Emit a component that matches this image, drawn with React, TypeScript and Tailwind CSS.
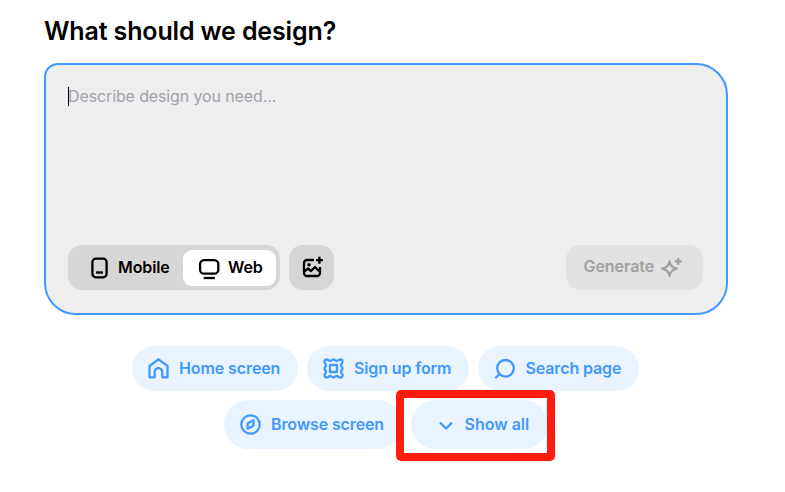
import React from "react";

type IconProps = { className?: string; children: React.ReactNode };

function Icon({ className = "", children }: IconProps) {
  return (
    <svg
      viewBox="0 0 24 24"
      className={`size-6 shrink-0 ${className}`}
      fill="none"
      stroke="currentColor"
      strokeWidth={2.3}
      strokeLinejoin="round"
    >
      {children}
    </svg>
  );
}

type ChipProps = { label: string; box: string; icon: React.ReactNode };

function Chip({ label, box, icon }: ChipProps) {
  return (
    <button className={`flex shrink-0 items-center rounded-full bg-[#e9f4ff] text-base font-semibold whitespace-nowrap text-[#4199ff] ${box}`}>
      {icon}
      <span className="pb-0.5">{label}</span>
    </button>
  );
}

export default function App() {
  return (
    <main className="relative h-[492px] w-[785px] overflow-hidden bg-white font-['Inter',sans-serif] text-black">
      <h1 className="ml-11 pt-[13px] text-[25px] leading-9 font-semibold tracking-[-0.14px] whitespace-nowrap">What should we design?</h1>

      <section className="mt-[14px] ml-11 flex h-[252px] w-[684px] flex-col justify-between rounded-[32px] rounded-tl-[14px] border-2 border-[#4199ff] bg-[#eeeeee] px-[22px] pt-5 pb-[23px]">
        <div className="flex h-6 items-center text-base tracking-[-0.12px] text-[#a0a3ad]">
          <span className="-mr-px mb-px h-[19px] w-px bg-black" />
          <span className="pb-0.5">Describe design you need...</span>
        </div>

        <div className="flex items-center pr-px">
          <div className="flex h-[45px] w-[212px] items-center rounded-[14px] bg-[#d6d6d6] text-base font-semibold tracking-[-0.1px]">
            <button className="flex w-[115px] items-center gap-[7px] pl-[19px]">
              <Icon>
                <rect x="5.4" y="2.7" width="14.2" height="18.6" rx="3.5" />
                <path d="M9 16.500h7" />
              </Icon>
              <span className="pb-0.5">Mobile</span>
            </button>
            <button className="flex h-9 w-[93px] items-center gap-[7px] rounded-[9px] bg-white pl-[14px]">
              <Icon>
                <rect x="3.1" y="4.100" width="18.200" height="13.600" rx="4" />
                <path d="M6.700 22h11.200" />
              </Icon>
              <span className="pb-0.5">Web</span>
            </button>
          </div>

          <button className="ml-[9px] flex size-[45px] items-center justify-center rounded-[14px] bg-[#d6d6d6]">
            <Icon>
              <path d="M14 4H7a3 3 0 0 0-3 3v10a3 3 0 0 0 3 3h10a3 3 0 0 0 3-3v-6M4 16l4-3.500 3 2.500 4-4 5 5M19.400.7v7M15.900 4.200h7" />
              <circle cx="9" cy="8.800" r="1.700" fill="currentColor" stroke="none" />
            </Icon>
          </button>

          <button className="ml-auto flex h-[45px] w-[137px] items-center gap-[5px] rounded-[14px] bg-[#e2e2e2] pb-0.5 pl-[17.500px] text-base font-semibold tracking-[-0.05px] text-[#a1a1a1]">
            <span className="pb-0.5">Generate</span>
            <Icon className="mt-0.5">
              <path d="M10.500 5.500c.8 4.300 2.900 6.400 7.300 7.200-4.400.8-6.500 2.900-7.300 7.200-.8-4.300-2.900-6.400-7.300-7.200 4.400-.8 6.500-2.900 7.300-7.200ZM19.200 2v6.800M15.800 5.400h6.800" />
            </Icon>
          </button>
        </div>
      </section>

      <div className="mt-[31px] ml-[132px] flex gap-[9px]">
        <Chip
          label="Home screen"
          box="h-[45px] w-[166px] gap-2 pl-[15px] tracking-[-0.1px]"
          icon={
            <Icon>
              <path d="M2.500 9 11.500 2.300l9 6.700v11.300h-5.200v-5.300a3.800 3.800 0 0 0-7.600 0v5.300H2.500z" />
            </Icon>
          }
        />
        <Chip
          label="Sign up form"
          box="h-[45px] w-[162px] gap-2 pl-[15px] tracking-[-0.12px]"
          icon={
            <Icon>
              <path d="M4.800 2.500C6.400 2.500 6.400 4 8.200 4S9.800 2.500 11.500 2.500 13 4 14.800 4 16.600 2.500 18.200 2.500C20 2.500 20.500 3 20.500 4.800 20.500 6.400 19 6.400 19 8.200S20.500 9.800 20.500 11.500 19 13 19 14.800 20.500 16.600 20.500 18.200C20.500 20 20 20.500 18.200 20.500 16.600 20.500 16.600 19 14.800 19S13.200 20.500 11.500 20.500 10 19 8.200 19 6.400 20.500 4.800 20.500C3 20.500 2.500 20 2.500 18.200 2.500 16.600 4 16.600 4 14.800S2.500 13.200 2.500 11.500 4 10 4 8.200 2.500 6.400 2.500 4.800C2.500 3 3 2.500 4.800 2.500Z" />
              <rect x="8" y="8" width="7" height="7" />
            </Icon>
          }
        />
        <Chip
          label="Search page"
          box="h-[45px] w-[161px] gap-[7.500px] pl-4 tracking-[-0.12px]"
          icon={
            <Icon>
              <circle cx="11.500" cy="11.300" r="8.300" />
              <path d="m5.800 16.800-4.500 4.500" />
            </Icon>
          }
        />
      </div>

      <div className="mt-[9px] ml-[224px] flex gap-[9px]">
        <Chip
          label="Browse screen"
          box="h-[49px] w-[178px] gap-2 pl-[15px] tracking-[-0.12px]"
          icon={
            <Icon>
              <circle cx="11.500" cy="11.500" r="9.200" />
              <path d="m8.700 10.300 5.800-3v5.400l-5.800 3z" />
            </Icon>
          }
        />
        <Chip
          label="Show all"
          box="h-[49px] w-[137px] gap-[7px] pl-[22.500px]"
          icon={
            <Icon>
              <path d="m6 9.500 6 6 6-6" />
            </Icon>
          }
        />
      </div>

      <div className="absolute top-[390px] left-[396px] h-[71px] w-[159px] rounded-[5px] border-8 border-[#ff1c0e]" />
    </main>
  );
}
